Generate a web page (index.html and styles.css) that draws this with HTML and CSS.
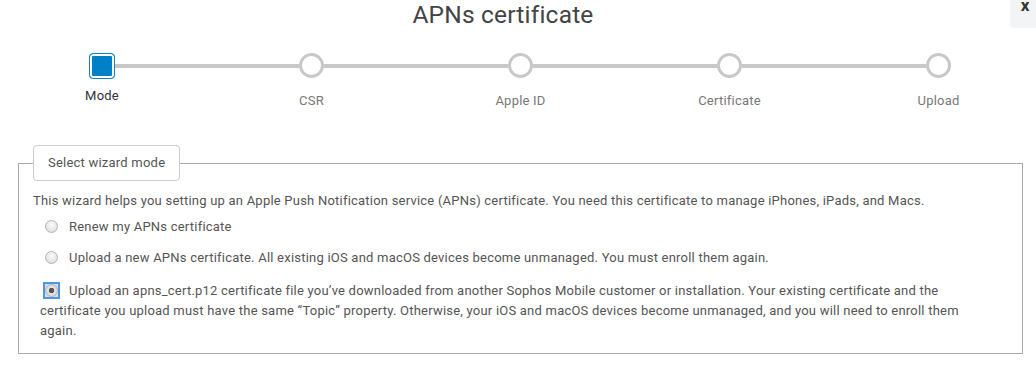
FILE: index.html
```html
<!DOCTYPE html>
<html lang="en">
<head>
  <meta charset="UTF-8" />
  <title>APNs certificate</title>
  <link rel="stylesheet" href="styles.css">
</head>
<body>
  <div class="dialog">
    <button class="close" type="button">x</button>
    <h1 class="title">APNs certificate</h1>

    <!-- wizard steps -->
    <div class="stepper">
      <div class="step active"><span class="marker"></span><span class="label">Mode</span></div>
      <div class="line"></div>
      <div class="step"><span class="marker"></span><span class="label">CSR</span></div>
      <div class="line"></div>
      <div class="step"><span class="marker"></span><span class="label">Apple ID</span></div>
      <div class="line"></div>
      <div class="step"><span class="marker"></span><span class="label">Certificate</span></div>
      <div class="line"></div>
      <div class="step"><span class="marker"></span><span class="label">Upload</span></div>
    </div>

    <!-- mode selection -->
    <fieldset class="mode-box">
      <legend>Select wizard mode</legend>
      <p class="intro">This wizard helps you setting up an Apple Push Notification service (APNs) certificate. You need this certificate to manage iPhones, iPads, and Macs.</p>
      <label class="option"><input type="radio" name="mode" value="renew">Renew my APNs certificate</label>
      <label class="option"><input type="radio" name="mode" value="new">Upload a new APNs certificate. All existing iOS and macOS devices become unmanaged. You must enroll them again.</label>
      <label class="option"><span class="focus-ring"><input type="radio" name="mode" value="upload" checked></span>Upload an apns_cert.p12 certificate file you’ve downloaded from another Sophos Mobile customer or installation. Your existing certificate and the certificate you upload must have the same “Topic” property. Otherwise, your iOS and macOS devices become unmanaged, and you will need to enroll them again.</label>
    </fieldset>
  </div>
</body>
</html>
```

FILE: styles.css
```css
body {
  margin: 0;
  font-family: Roboto, 'Liberation Sans', sans-serif;
  font-size: 13px;
  letter-spacing: 0.22px;
  color: #555;
  background-color: #fff;
  overflow: hidden;
}

.dialog {
  position: relative;
  width: 1036px;
  height: 377px;
}

.close {
  position: absolute;
  top: -18px;
  left: 1010px;
  width: 40px;
  height: 46px;
  padding: 0 10px 0 0;
  border: none;
  border-radius: 4px;
  background-color: #f3f4f6;
  color: #333;
  font-family: Roboto, sans-serif;
  font-size: 17px;
  font-weight: bold;
  line-height: 24px;
  cursor: pointer;
}

.title {
  margin: 0 0 23px;
  padding-right: 30px;
  font-size: 24.5px;
  font-weight: normal;
  letter-spacing: 0.2px;
  line-height: 30px;
  text-align: center;
  color: #444;
}

.stepper {
  display: flex;
  padding: 0 85px 0 89px;
}

.step {
  display: flex;
  flex-direction: column;
  align-items: center;
  width: 25px;
}

.step .marker {
  box-sizing: border-box;
  width: 25px;
  height: 25px;
  border: 3px solid #c8c8c8;
  border-radius: 50%;
  background-color: #fff;
}

.step .label {
  margin-top: 15px;
  line-height: 16px;
  white-space: nowrap;
  color: #777;
}

.step.active {
  width: 26px;
}

.step.active .marker {
  width: 26px;
  height: 26px;
  border: 1px solid #0a84c9;
  border-radius: 4px;
  background-color: #0080c6;
  box-shadow: inset 0 0 0 2px #fff;
}

.step.active .label {
  margin-top: 9px;
  color: #333;
}

.line {
  flex: 1;
  height: 4px;
  margin-top: 11px;
  background-color: #c8c8c8;
}

.mode-box {
  margin: 36px 13px 0 18px;
  padding: 10px 14px 12px;
  border: 1px solid #aaa;
}

.mode-box legend {
  padding: 0 14px;
  border: 1px solid #ccc;
  border-radius: 4px;
  line-height: 34px;
  color: #555;
  background-color: #fff;
}

.intro {
  margin: 0;
  line-height: 20px;
}

.option {
  display: block;
  margin-top: 11px;
  padding: 0 30px 0 7px;
  line-height: 20px;
}

.intro + .option {
  margin-top: 6px;
}

.option:last-child {
  margin-top: 13px;
}

.option input[type="radio"] {
  appearance: none;
  -webkit-appearance: none;
  box-sizing: border-box;
  width: 13px;
  height: 13px;
  margin: 0 11px 0 5px;
  vertical-align: -2px;
  border: 1px solid #b4b4b4;
  border-radius: 50%;
  background: radial-gradient(circle at 50% 35%, #fafafa, #d9d9d9);
}

.option input[type="radio"]:checked {
  background: radial-gradient(circle, #555 0, #555 2.5px, #e2e2e2 3px, #cfcfcf);
}

.focus-ring {
  display: inline-block;
  margin: 1px 9px 0 3px;
  vertical-align: top;
  border: 2px solid #4f95e3;
  background-color: #cfe2f6;
  line-height: 0;
}

.focus-ring input[type="radio"] {
  margin: 0;
  vertical-align: top;
}
```
